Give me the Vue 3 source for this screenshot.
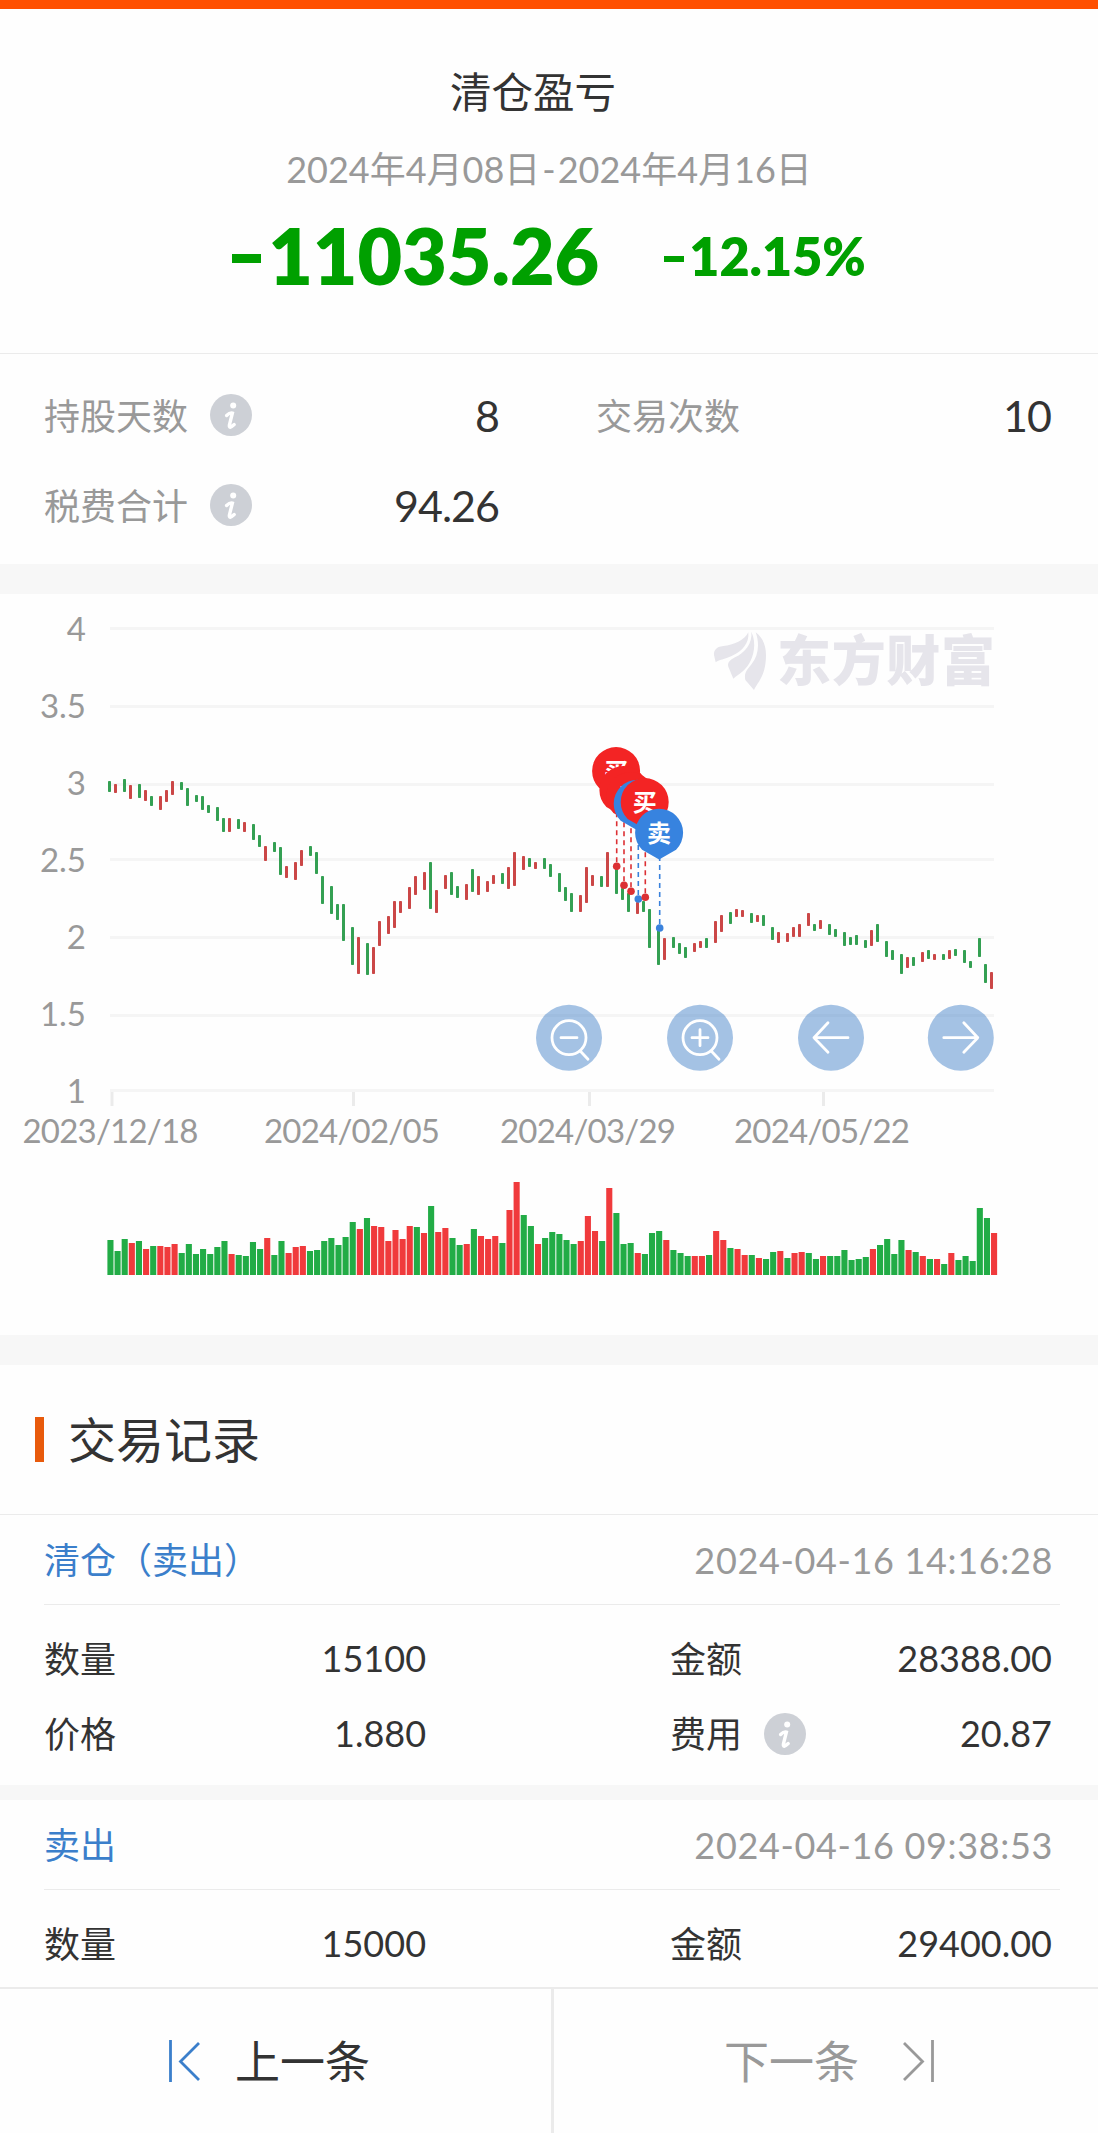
<template>
  <div class="page">
    <div class="top-bar"></div>

    <header class="summary">
      <h1 class="summary-title">清仓盈亏</h1>
      <p class="summary-period">2024年4月08日<span class="dash">-</span>2024年4月16日</p>
      <div class="summary-result">
        <span class="profit"><i class="minus"></i>11035.26</span>
        <span class="percent"><i class="minus"></i>12.15%</span>
      </div>
    </header>

    <section class="stats">
      <div v-for="item in stats" :key="item.label" class="stat">
        <span class="stat-label">{{ item.label }}</span>
        <span v-if="item.info" class="info"><svg viewBox="0 0 42 42"><circle cx="23.2" cy="11.5" r="3" /><path d="M16.6 21.5Q20 18.2 22.4 19L19.4 31Q18.8 35.6 24.2 30.6" /></svg></span>
        <span class="stat-value">{{ item.value }}</span>
      </div>
    </section>

    <div class="band"></div>

    <section class="chart">
      <svg width="1098" height="741" viewBox="0 0 1098 741">
        <!-- сетка и подписи оси Y -->
        <g v-for="(line, i) in gridLines" :key="line.label">
          <rect x="110" :y="line.y" width="884" height="3" fill="#f5f5f5" />
          <text class="axis" x="86" :y="46.5 + i * 77.1" text-anchor="end">{{ line.label }}</text>
        </g>

        <!-- подписи оси X -->
        <g v-for="tick in ticks" :key="tick.label">
          <rect :x="tick.x - 1" y="498" width="3" height="14" fill="#ebebeb" />
          <text class="axis" :x="tick.x - 1" y="549" text-anchor="middle" textLength="176">{{ tick.label }}</text>
        </g>

        <!-- логотип -->
        <g fill="#e6e5eb">
          <g transform="translate(690 6) scale(0.3333)">
            <path d="M175 97C165 120 130 136 100 138C78 140 71 152 72 165L77 187C85 180 105 177 125 168C158 153 178 130 175 97Z" />
            <path d="M184 95C188 130 165 158 135 172C117 181 112 190 115 200L130 236C145 224 165 213 178 190C190 170 201 130 184 95Z" />
            <path d="M197 97C209 130 206 165 185 192C168 212 162 222 166 240L192 270C205 245 228 225 228 165C228 135 218 113 197 97Z" />
          </g>
          <text class="brand" x="777" y="87" textLength="218">东方财富</text>
        </g>

        <!-- свечи -->
        <rect
          v-for="(c, i) in candles"
          :key="'c' + i"
          :x="c.x"
          :y="c.top"
          width="3"
          :height="c.height"
          rx="0.8"
          :fill="c.color"
        />

        <!-- сделки -->
        <g v-for="(t, i) in trades" :key="'d' + i" :stroke="t.color" :fill="t.color">
          <line :x1="t.x" :y1="t.y - 4" :x2="t.x" :y2="t.y - 70" stroke-width="1.6" stroke-dasharray="5 4" />
          <circle :cx="t.x" :cy="t.y" r="3.8" stroke="none" />
        </g>
        <g v-for="(t, i) in trades" :key="'p' + i" :transform="`translate(${t.x - 0.6} ${t.y - 95.3})`">
          <path d="M0 26.7L-17 17A24 24 0 1 1 17 17Z" :fill="t.pin" />
          <text class="pin-text" y="9" text-anchor="middle">{{ t.type }}</text>
        </g>

        <!-- кнопки управления -->
        <g v-for="b in buttons" :key="b.x" :transform="`translate(${b.x} 443.7)`">
          <circle r="33" fill="#3277c4" fill-opacity="0.44" />
          <path :d="b.icon" fill="none" stroke="#fff" stroke-width="2.8" stroke-linecap="round" stroke-linejoin="round" />
        </g>

        <!-- объемы -->
        <rect
          v-for="(v, i) in volumes"
          :key="'v' + i"
          :x="v.x"
          :y="681 - v.height"
          width="6.1"
          :height="v.height"
          :fill="v.color"
        />
      </svg>
    </section>

    <div class="band"></div>

    <section class="records">
      <h2 class="records-title"><span>交易记录</span></h2>
      <article v-for="record in records" :key="record.time" class="record">
        <div class="record-head">
          <span class="record-type">{{ record.type }}</span>
          <time>{{ record.time }}</time>
        </div>
        <div class="record-body">
          <div v-for="row in record.rows" :key="row[0]" class="record-row">
            <span class="row-label">{{ row[0] }}</span>
            <span class="row-value">{{ row[1] }}</span>
            <span class="row-label row-second">{{ row[2] }}</span>
            <span v-if="row[2] === '费用'" class="info"><svg viewBox="0 0 42 42"><circle cx="23.2" cy="11.5" r="3" /><path d="M16.6 21.5Q20 18.2 22.4 19L19.4 31Q18.8 35.6 24.2 30.6" /></svg></span>
            <span class="row-amount">{{ row[3] }}</span>
          </div>
        </div>
      </article>
    </section>

    <footer class="footer">
      <button class="nav prev">
        <svg width="32" height="42" viewBox="0 0 32 42"><path d="M1.5 0V42M30 3L11.5 21.5L30 40" /></svg>
        <span>上一条</span>
      </button>
      <button class="nav next">
        <span>下一条</span>
        <svg width="32" height="42" viewBox="0 0 32 42"><path d="M30.5 0V42M2 3L20.5 21.5L2 40" /></svg>
      </button>
    </footer>
  </div>
</template>

<script setup>
const stats = [
  { label: '持股天数', value: '8', info: true },
  { label: '交易次数', value: '10' },
  { label: '税费合计', value: '94.26', info: true },
];

const gridLines = [
  { label: '4', y: 33 },
  { label: '3.5', y: 111 },
  { label: '3', y: 189 },
  { label: '2.5', y: 264 },
  { label: '2', y: 342 },
  { label: '1.5', y: 420 },
  { label: '1', y: 495 },
];

const ticks = [
  { label: '2023/12/18', x: 111.5 },
  { label: '2024/02/05', x: 353 },
  { label: '2024/03/29', x: 589 },
  { label: '2024/05/22', x: 823 },
];

// g - падение, r - рост, дальше верх и низ свечи
const candleData = `
g187-198 r190-199 g185-198 r191-205 g190-204 r196-207 g202-212 r202-216 r196-208 r187-201
g188-196 g194-212 g201-208 g202-216 g211-219 g213-227 g224-238 r224-238 g225-235 r228-238
g230-246 g241-253 r252-267 g248-258 g253-281 r272-284 r268-286 r256-272 g252-262 g258-280
g282-310 g292-320 g310-326 g310-347 g333-371 r343-380 g349-381 r353-380 r327-352 r322-340
r307-334 r307-319 r293-315 r282-301 r278-296 g268-315 r296-319 r281-295 g278-301 g292-304
r290-306 g275-298 r282-301 r287-298 r281-290 g279-290 r273-295 r258-292 r262-276 g264-273
r268-275 g264-275 g270-283 g279-298 g293-307 g299-318 r301-318 r273-309 r281-292 g282-293
r258-293 g274-300 g294-306 g299-318 r308-320 g307-318 g315-354 g336-371 r344-366 g343-354
g349-360 g353-364 r349-358 r347-354 g344-354 r327-349 r321-338 g318-330 r315-323 r316-323
g319-329 r321-328 g321-332 g333-346 r338-349 r339-348 r333-343 r330-343 r319-332 g330-337
r326-335 g330-341 g335-343 g338-352 g343-351 g341-351 g346-354 r336-352 g330-348 g347-363
g356-366 g360-380 r363-374 g363-372 r358-368 g356-365 r360-366 g360-366 r356-365 g355-362
g356-369 g367-374 g344-363 g370-389 r378-395`;

const candles = candleData.trim().split(/\s+/).map((item, i) => {
  const [top, bottom] = item.slice(1).split('-').map(Number);
  return {
    x: 108 + 3 * Math.round(2.373 * i + 0.1),
    top,
    height: bottom - top,
    color: item[0] === 'g' ? '#34a053' : '#cb4747',
  };
});

const volumeData = `
g35 g24 g36 r32 g34 r26 g29 r29 r28 r31 g22 g31 g21 g26 g21 g28 g34 r21 g20 g19
g33 g26 r37 g20 g34 r22 r28 r29 g24 g25 g34 g37 g30 g38 g53 r46 g57 r49 r48 r34
r45 r36 r49 g48 r42 g69 r43 r47 g37 g30 r31 g46 r39 r36 r39 g32 r65 r93 g60 g49
r31 g37 g43 g41 g35 g31 r34 r59 r44 g34 r87 g62 g31 g32 r22 g21 g42 g44 r35 g25
g22 g19 r19 r19 g20 r44 r35 g27 r26 r20 g20 r17 g16 g23 r24 g17 r22 r23 g22 g16
r19 g19 g19 g25 g15 g16 g18 r26 g30 g36 g21 g35 r25 g23 r19 g16 r16 g11 r22 g15
g19 g14 g67 g57 r42`;

const volumes = volumeData.trim().split(/\s+/).map((item, i) => ({
  x: 107.4 + i * 7.126,
  height: Number(item.slice(1)),
  color: item[0] === 'g' ? '#22ac46' : '#f03a3c',
}));

const buy = { type: '买', color: '#dc3034', pin: '#f32424' };
const sell = { type: '卖', color: '#3a82dc', pin: '#3783df' };

const trades = [
  { ...buy, x: 616.7, y: 272.3 },
  { ...buy, x: 624, y: 291.3 },
  { ...buy, x: 631, y: 297.3 },
  { ...sell, x: 638.3, y: 305 },
  { ...buy, x: 645.3, y: 303.3 },
  { ...sell, x: 659.7, y: 334 },
];

const lens = 'M17 0A17 17 0 1 1 -17 0A17 17 0 1 1 17 0M11 13L19 21.5';

const buttons = [
  { x: 569, icon: lens + 'M-8 0H8' },
  { x: 700, icon: lens + 'M-8 0H8M0 -8V8' },
  { x: 831, icon: 'M17 0H-17M-3 -15L-17 0L-3 14.5' },
  { x: 960.8, icon: 'M-17 0H17M3 -15L17 0L3 14.5' },
];

const records = [
  {
    type: '清仓（卖出）',
    time: '2024-04-16 14:16:28',
    rows: [
      ['数量', '15100', '金额', '28388.00'],
      ['价格', '1.880', '费用', '20.87'],
    ],
  },
  {
    type: '卖出',
    time: '2024-04-16 09:38:53',
    rows: [['数量', '15000', '金额', '29400.00']],
  },
];
</script>

<style>
body {
  margin: 0;
  background: #fff;
}
</style>

<style scoped>
* {
  box-sizing: border-box;
}

.page {
  display: flex;
  flex-direction: column;
  width: 1098px;
  height: 2133px;
  overflow: hidden;
  background: #fefefe;
  color: #333;
  font-family: Lato, "Noto Sans CJK SC", sans-serif;
  font-size: 36px;
}

.top-bar {
  height: 9px;
  background: #ff5000;
}

.summary {
  height: 345px;
  padding-top: 53px;
  border-bottom: 1px solid #ebebeb;
  text-align: center;
}

.summary-title {
  margin: 0;
  padding-right: 32px;
  font-size: 41.5px;
  font-weight: 400;
  line-height: 60px;
}

.summary-period {
  margin: 22px 0 19px;
  color: #999;
  line-height: 50px;
}

.dash {
  margin: 0 2px;
}

.summary-result {
  display: flex;
  align-items: center;
  justify-content: center;
  gap: 65px;
  color: #00a000;
  font-weight: 800;
  line-height: 80px;
}

.profit,
.percent {
  display: flex;
  align-items: center;
}

.profit {
  font-size: 77px;
}

.percent {
  padding-top: 3px;
  font-size: 52px;
}

.minus {
  width: 29px;
  height: 9px;
  margin: 8px 7px 0 0;
  background: #00a000;
}

.percent .minus {
  width: 20px;
  height: 6px;
  margin: 5px 5px 0 0;
}

.stats {
  display: grid;
  grid-template-columns: 455px 455px;
  grid-auto-rows: 90px;
  column-gap: 97px;
  height: 210px;
  padding: 16px 44px 14px;
}

.stat {
  display: flex;
  align-items: center;
}

.stat-label {
  padding-bottom: 3px;
  color: #999;
}

.stat-value {
  margin-left: auto;
  font-size: 43px;
  letter-spacing: -1px;
}

.info {
  width: 42px;
  height: 42px;
  margin-left: 22px;
  border-radius: 50%;
  background: #cdd0d6;
}

.info svg {
  display: block;
  fill: #fff;
}

.info path {
  fill: none;
  stroke: #fff;
  stroke-width: 3.4;
  stroke-linecap: round;
}

.band {
  height: 30px;
  background: #f7f7f7;
}

.chart {
  height: 741px;
}

.chart svg {
  display: block;
}

.axis {
  fill: #999;
  font-size: 33px;
}

.brand {
  font-size: 54px;
  font-weight: 900;
}

.pin-text {
  fill: #fff;
  font-size: 24px;
  font-weight: 700;
}

.records {
  flex: 1;
  overflow: hidden;
}

.records-title {
  display: flex;
  align-items: center;
  gap: 24px;
  height: 150px;
  margin: 0;
  padding-left: 35px;
  border-bottom: 1px solid #ebebeb;
  font-size: 48px;
  font-weight: 400;
}

.records-title span {
  padding-bottom: 5px;
}

.records-title::before {
  content: "";
  width: 9px;
  height: 45px;
  background: #e85a0c;
}

.record {
  border-bottom: 15px solid #f7f7f7;
}

.record:last-child {
  border-bottom: 0;
}

.record-head {
  display: flex;
  align-items: center;
  justify-content: space-between;
  height: 90px;
  margin: 0 38px 0 44px;
  padding-right: 7px;
  border-bottom: 1px solid #ebebeb;
}

.record-type {
  padding-bottom: 3px;
  color: #3b7fcb;
}

.record-head time {
  color: #999;
  letter-spacing: 0.65px;
}

.record-body {
  padding: 16px 46px 14px 44px;
}

.record-row {
  display: flex;
  align-items: center;
  height: 75px;
}

.row-label {
  padding-bottom: 4px;
}

.row-value {
  width: 310px;
  padding-bottom: 2px;
  text-align: right;
}

.row-second {
  margin-left: 244px;
}

.row-amount {
  margin-left: auto;
  padding-bottom: 2px;
}

.footer {
  display: flex;
  flex: none;
  height: 146px;
  border-top: 2px solid #ebebeb;
}

.nav {
  display: flex;
  align-items: center;
  gap: 34px;
  padding: 0;
  border: 0;
  background: none;
  color: #333;
  font-family: inherit;
  font-size: 45px;
}

.nav span {
  padding-bottom: 4px;
}

.nav path {
  fill: none;
  stroke: currentColor;
  stroke-width: 2.8;
}

.prev {
  width: 554px;
  padding-left: 169px;
  border-right: 3px solid #ebebeb;
}

.prev svg {
  color: #3b7fcb;
}

.next {
  gap: 43px;
  padding-left: 170px;
  color: #999;
}
</style>
